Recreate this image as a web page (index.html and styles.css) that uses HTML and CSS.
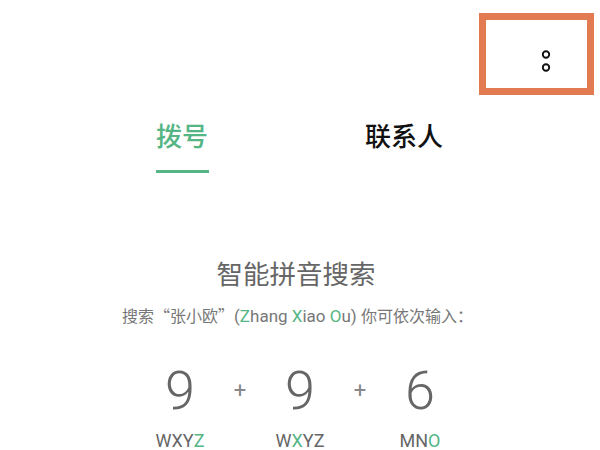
FILE: index.html
```html
<!DOCTYPE html>
<html lang="zh-CN">
<head>
  <meta charset="UTF-8">
  <meta name="viewport" content="width=device-width, initial-scale=1.0">
  <title>拨号</title>
  <link rel="stylesheet" href="styles.css">
</head>
<body>
  <div class="screen">

    <!-- Top bar with overflow menu -->
    <div class="topbar">
      <div class="menu-btn">
        <svg width="14" height="24" viewBox="0 0 14 24">
          <circle cx="7" cy="5.5" r="3.2" fill="none" stroke="#111" stroke-width="1.9"/>
          <circle cx="7" cy="18.5" r="3.2" fill="none" stroke="#111" stroke-width="1.9"/>
        </svg>
      </div>
    </div>

    <!-- Tabs -->
    <div class="tabs">
      <div class="tab active">
        <span>拨号</span>
        <div class="tab-line"></div>
      </div>
      <div class="tab">
        <span>联系人</span>
      </div>
    </div>

    <!-- Pinyin search hint -->
    <div class="hint">
      <div class="hint-title">智能拼音搜索</div>
      <div class="hint-sub">搜索“张小欧”<span class="latin">(<em>Z</em>hang <em>X</em>iao <em>O</em>u) </span>你可依次输入：</div>

      <div class="keys">
        <div class="key">9</div>
        <div class="plus">+</div>
        <div class="key">9</div>
        <div class="plus">+</div>
        <div class="key">6</div>
      </div>
      <div class="letters">
        <div class="letter">WXY<em>Z</em></div>
        <div class="letter">W<em>X</em>YZ</div>
        <div class="letter">MN<em>O</em></div>
      </div>
    </div>

    <!-- highlight frame over the menu button -->
    <div class="highlight"></div>
  </div>
</body>
</html>
```

FILE: styles.css
```css
/* Basic styling */
body, html {
  margin: 0;
  padding: 0;
  background-color: #fff;
  font-family: "Noto Sans CJK SC", "Noto Sans", sans-serif;
}

.screen {
  position: relative;
  width: 600px;
  height: 450px;
  overflow: hidden;
}

em {
  font-style: normal;
  color: #55b585;
}

/* Top bar */
.topbar {
  height: 118px;
  display: flex;
  justify-content: flex-end;
  align-items: flex-start;
}
.menu-btn {
  margin-top: 49px;
  margin-right: 47px;
  width: 14px;
  height: 24px;
}
.menu-btn svg {
  display: block;
}

/* Tabs */
.tabs {
  display: flex;
  margin-left: 71px;
}
.tab {
  width: 222px;
  display: flex;
  flex-direction: column;
  align-items: center;
  font-size: 26px;
  line-height: 34px;
  font-weight: 500;
  color: #111;
}
.tab.active {
  color: #55b585;
}
.tab-line {
  width: 53px;
  height: 3px;
  margin-top: 18px;
  background-color: #55b585;
}

/* Hint block */
.hint {
  margin-top: 83px;
  display: flex;
  flex-direction: column;
  align-items: center;
}
.hint-title {
  margin-right: 8px;
  font-size: 26.5px;
  line-height: 34px;
  color: #666;
}
.hint-sub {
  margin-top: 13px;
  margin-right: 5px;
  font-size: 16px;
  line-height: 24px;
  color: #777;
}
.hint-sub .latin {
  font-family: Roboto, "Noto Sans", sans-serif;
  font-size: 17px;
}
.keys {
  margin-top: 33px;
  display: flex;
  font-family: Roboto, "Noto Sans", sans-serif;
}
.key {
  width: 60px;
  text-align: center;
  font-size: 54px;
  line-height: 60px;
  font-weight: 300;
  color: #666;
}
.plus {
  width: 60px;
  text-align: center;
  font-size: 22px;
  line-height: 60px;
  color: #888;
}
.letters {
  display: flex;
  margin-top: 8px;
  font-family: Roboto, "Noto Sans", sans-serif;
}
.letter {
  width: 120px;
  text-align: center;
  font-size: 18px;
  line-height: 24px;
  color: #666;
}

/* Orange highlight frame */
.highlight {
  position: absolute;
  left: 479px;
  top: 13px;
  width: 101px;
  height: 68px;
  border: 7px solid #e27b52;
}
```
